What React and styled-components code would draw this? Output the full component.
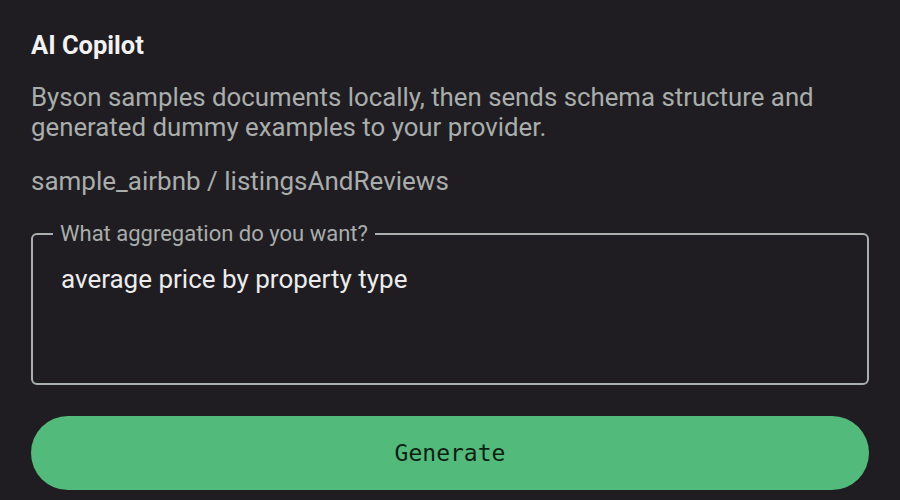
import React from 'react'
import styled, { createGlobalStyle } from 'styled-components'

const GlobalStyle = createGlobalStyle`
  html, body {
    margin: 0;
    padding: 0;
    background: #1f1d21;
  }
  body {
    font-family: Roboto, "Noto Sans", sans-serif;
  }
`

export default function App() {
  return (
    <>
      <GlobalStyle />
      <Page>
        <Title>AI Copilot</Title>
        <Description>
          Byson samples documents locally, then sends schema structure and
          generated dummy examples to your provider.
        </Description>
        <Collection>sample_airbnb / listingsAndReviews</Collection>
        <PromptBox>
          <PromptLabel>What aggregation do you want?</PromptLabel>
          <PromptInput readOnly value="average price by property type" />
        </PromptBox>
        <GenerateButton>Generate</GenerateButton>
      </Page>
    </>
  )
}

const Page = styled.main`
  display: flex;
  flex-direction: column;
  padding: 30px 31px 0;
  width: 900px;
  height: 500px;
  box-sizing: border-box;
  overflow: hidden;
`

const Title = styled.h2`
  margin: 0;
  font-size: 25.5px;
  line-height: 30px;
  font-weight: 700;
  color: #f2f2f2;
`

const Description = styled.p`
  margin: 22px 0 0;
  font-size: 25.8px;
  line-height: 30px;
  color: #a9adab;
`

const Collection = styled.p`
  margin: 24px 0 0;
  font-size: 26px;
  line-height: 30px;
  color: #a9adab;
`

const PromptBox = styled.fieldset`
  margin: 25px 0 0;
  padding: 0 20px 0 20px;
  height: 164px;
  box-sizing: border-box;
  border: 2px solid #a9b0ad;
  border-radius: 6px;
  display: flex;
  flex-direction: column;
`

const PromptLabel = styled.legend`
  padding: 0 7px;
  font-size: 22px;
  color: #a9adab;
`

const PromptInput = styled.textarea`
  flex: 1;
  margin: 0;
  padding: 18px 8px 0;
  border: none;
  outline: none;
  resize: none;
  background: transparent;
  font-family: Roboto, "Noto Sans", sans-serif;
  font-size: 26px;
  line-height: 30px;
  color: #ececec;
`

const GenerateButton = styled.button`
  margin-top: 31px;
  height: 74px;
  flex-shrink: 0;
  border: none;
  border-radius: 37px;
  background: #52bb7b;
  color: #0c1f13;
  font-family: "DejaVu Sans Mono", monospace;
  font-size: 23px;
  cursor: pointer;
`
